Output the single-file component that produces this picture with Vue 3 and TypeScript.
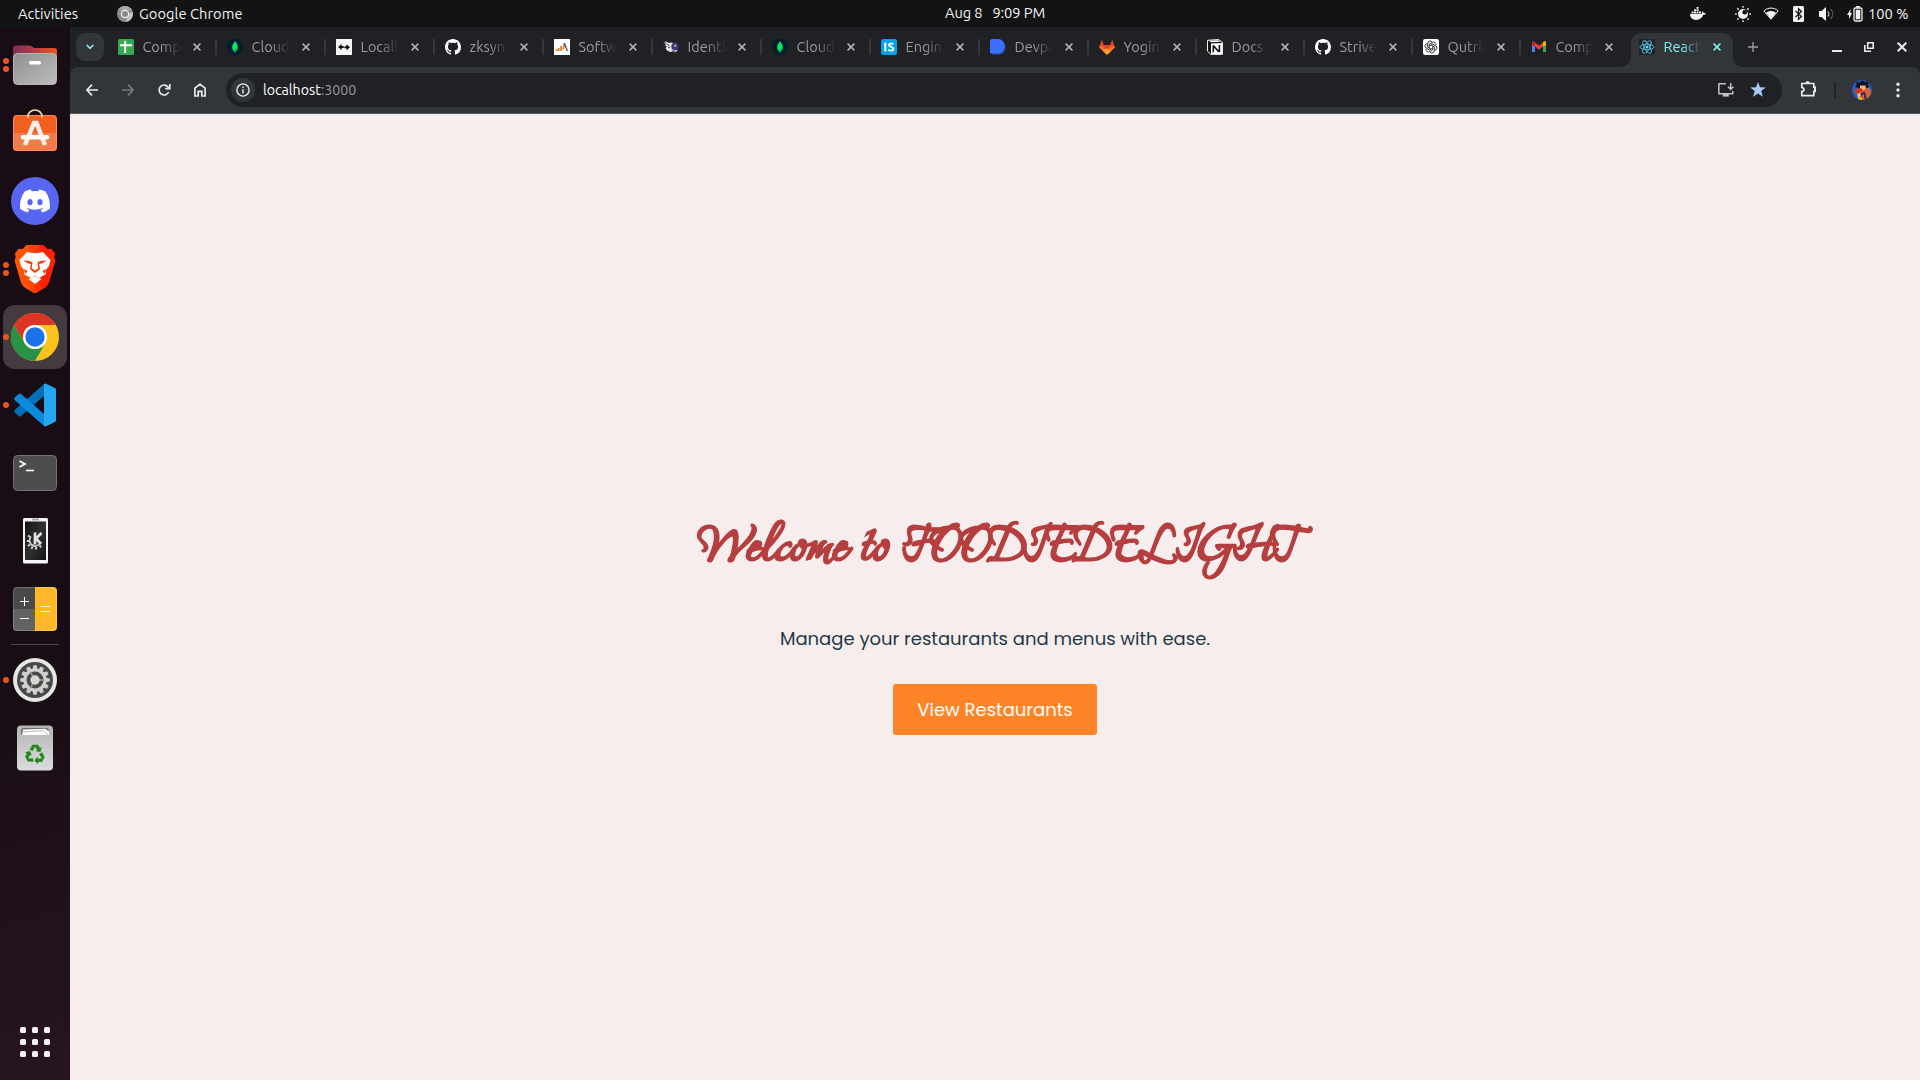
<script setup lang="ts">
interface Tab {
  title: string
  icon: string
  width: number
}

const github =
  '<path fill="#fff" d="M8 0C3.58 0 0 3.58 0 8c0 3.54 2.29 6.53 5.47 7.59.4.07.55-.17.55-.38 0-.19-.01-.82-.01-1.49-2.01.37-2.53-.49-2.69-.94-.09-.23-.48-.94-.82-1.13-.28-.15-.68-.52-.01-.53.63-.01 1.08.58 1.23.82.72 1.21 1.87.87 2.33.66.07-.52.28-.87.51-1.07-1.78-.2-3.64-.89-3.64-3.95 0-.87.31-1.59.82-2.15-.08-.2-.36-1.02.08-2.12 0 0 .67-.21 2.2.82.64-.18 1.32-.27 2-.27s1.36.09 2 .27c1.53-1.04 2.2-.82 2.2-.82.44 1.1.16 1.92.08 2.12.51.56.82 1.27.82 2.15 0 3.07-1.87 3.75-3.65 3.95.29.25.54.73.54 1.48 0 1.07-.01 1.93-.01 2.2 0 .21.15.46.55.38A8.01 8.01 0 0 0 16 8c0-4.42-3.58-8-8-8z"/>'
const mongo =
  '<circle cx="8" cy="8" r="8" fill="#001e2b"/><path fill="#00ed64" d="M8 2.2C6.200 4.500 5.200 6.200 5.200 8.300c0 2 1.100 3.300 2.300 4.200l.2 1.300h.6l.2-1.300c1.200-.9 2.300-2.200 2.300-4.200C10.800 6.200 9.800 4.500 8 2.200z"/><path fill="#00a35c" d="M8 9v4c.6-.3 1.300-1 1.700-2z"/>'

const tabs: Tab[] = [
  { title: 'Comp', width: 109, icon: '<rect width="16" height="16" rx="1.500" fill="#34a853"/><path d="M2 6.200h12M7.200 2v12" stroke="#fff" stroke-width="1.900"/>' },
  { title: 'Cloud', width: 109, icon: mongo },
  { title: 'Locall', width: 109, icon: '<rect width="16" height="16" fill="#f4f4f4"/><path d="M2 8l3.700-3v2h2v2h-2v2zM14 8.300L10.500 5.200v2H8.500v2h2v2z" fill="#0b0b0b"/>' },
  { title: 'zksyn', width: 109, icon: github },
  { title: 'Softw', width: 109, icon: '<rect width="16" height="16" fill="#fff"/><path d="M2.500 12v-1.800M4.700 12V9M7 12V7M9.100 10.500L10.500 4.500" stroke="#e2792f" stroke-width="1.700"/><path d="M10.300 4l3.100 8" stroke="#4b4f54" stroke-width="1.300"/>' },
  { title: 'Identi', width: 109, icon: '<path d="M0 3l3 1-1-2 4 2 2-.5 4 1-1 8-4 .5-3-1.500-1.500-2.500L4 7.500 1.500 6l2-.5z" fill="#e9e4e6"/><path d="M6 11l5-1 4 1-3 2.500z" fill="#d0c6ca"/><circle cx="12" cy="7.500" r="3.700" fill="#3c3589"/><circle cx="12.200" cy="6.800" r="1.300" fill="#c7a24c"/><path d="M3.500 4.500l3 2.500M5 8l2 1M9 12l3 .5" stroke="#292331" stroke-width=".8"/>' },
  { title: 'Cloud', width: 109, icon: mongo },
  { title: 'Engin', width: 109, icon: '<rect width="16" height="16" rx="2.500" fill="#05a2ec"/><path d="M4.300 3.600v8.800" stroke="#fff" stroke-width="2.100"/><path d="M12.300 5.300c-1.400-1.100-4.400-1.200-4.400.7 0 2.200 4.500 1.400 4.500 3.800 0 2.300-3.500 2.200-5.100.8" fill="none" stroke="#fff" stroke-width="1.800"/>' },
  { title: 'Devpa', width: 109, icon: '<path d="M2 1.500h7a6.500 7 0 0 1 0 14H2z" fill="#264eb4"/><path d="M1.500 0H8a6.700 7.200 0 0 1 0 14.400H1.500L0 14V1.500z" fill="#3b70ff"/>' },
  { title: 'Yogin', width: 108, icon: '<path d="M2.800.8L0 8l8 7.800L16 8 13.200.8 11 6H5z" fill="#e24329"/><path d="M8 15.800L.2 8.500 1.200 7l4 .5zM8 15.800l7.800-7.300-1-1.500-4 .5z" fill="#fc6d26"/><path d="M8 15.800L3.800 12 8 9.300l4.200 2.700z" fill="#fca326"/>' },
  { title: 'Docs', width: 108, icon: '<path d="M.5 1.300L11.500.5l4 2.800v12l-11.500.6L.5 12z" fill="#171717" stroke="#f1f1f1" stroke-width="1"/><path d="M4 4.600l11-.6v11l-11 .6z" fill="#fff"/><path d="M1.500 1.800l9.800-.5 2 1.400-9 .6z" fill="#fff"/><path d="M6.300 6.300v7M6.300 6.600l5.500 6.200M12.400 6v7" stroke="#111" stroke-width="1.600" fill="none"/>' },
  { title: 'Strive', width: 108, icon: github },
  { title: 'Qutriz', width: 108, icon: '<rect width="16" height="16" rx="2.200" fill="#fff"/><g fill="none" stroke="#222" stroke-width=".85"><path d="M6.200 9V5.200L9.500 3.300a2.400 2.400 0 0 1 3.400 2.900"/><path d="M6.200 9V5.200L9.500 3.300a2.400 2.400 0 0 1 3.400 2.900" transform="rotate(60 8 8)"/><path d="M6.200 9V5.200L9.500 3.300a2.400 2.400 0 0 1 3.400 2.900" transform="rotate(120 8 8)"/><path d="M6.200 9V5.200L9.500 3.300a2.400 2.400 0 0 1 3.400 2.900" transform="rotate(180 8 8)"/><path d="M6.200 9V5.200L9.500 3.300a2.400 2.400 0 0 1 3.400 2.900" transform="rotate(240 8 8)"/><path d="M6.200 9V5.200L9.500 3.300a2.400 2.400 0 0 1 3.400 2.900" transform="rotate(300 8 8)"/></g>' },
  { title: 'Comp', width: 100, icon: '<path d="M1 4v9h3V6.300z" fill="#4285f4"/><path d="M15 4v9h-3V6.300z" fill="#34a853"/><path d="M4 3.500l4 3.200 4-3.200v4L8 10.700 4 7.500z" fill="#ea4335"/><path d="M1 6V3.800C1 2.300 2.700 2 3.600 2.800L4 3.200v4.300z" fill="#c5221f"/><path d="M15 6V3.800c0-1.500-1.700-1.800-2.600-1l-.4.4v4.300z" fill="#fbbc04"/>' },
]

const teeth = Array.from({ length: 12 }, (_, i) => i * 30)
const rays = Array.from({ length: 8 }, (_, i) => i * 45)
</script>

<template>
  <div class="desktop">
    <header class="topbar">
      <span class="activities">Activities</span>
      <svg class="app-glyph" width="16" height="16" viewBox="0 0 16 16">
        <circle cx="8" cy="8" r="8" fill="#8b8b8b" />
        <path d="M1 4a8 8 0 0 1 14.200 0.500H8z" fill="#a6a6a6" />
        <path d="M15.500 5.500a8 8 0 0 1-6.800 10.400L12 8z" fill="#c4c4c4" />
        <circle cx="8" cy="8" r="3.600" fill="#8a8a8a" stroke="#efefef" stroke-width="1.200" />
      </svg>
      <span class="app-name">Google Chrome</span>
      <span class="clock"><span>Aug 8</span><span>9:09 PM</span></span>
      <div class="tray">
        <svg width="16" height="14" viewBox="0 0 16 14" fill="#f2f2f2">
          <path d="M0 7h11.500c.8-.2.700-1.600.3-2.300.8-.4 1.700.4 1.900 1.300.9-.2 1.900 0 2.300.4-.5 1-1.400 1.400-2.700 1.400C12 11 9.800 12.900 6.200 12.900 2.500 12.900.2 11 0 7z" />
          <path d="M1.500 4.500h2v2h-2zM4 4.500h2v2H4zM6.500 4.500h2v2h-2zM9 4.500h2v2H9zM4 2.200h2v1.900H4zM6.500 2.200h2v1.900h-2zM6.500 0h2v1.800h-2z" />
        </svg>
        <svg class="sun" width="16" height="16" viewBox="0 0 16 16">
          <path v-for="a in rays" :key="a" d="M8 0v1.800" :transform="`rotate(${a} 8 8)`" stroke="#d8d8d8" stroke-width="1.600" />
          <circle cx="8" cy="8" r="5" fill="#f2f2f2" />
          <circle cx="9.800" cy="6.200" r="2.400" fill="#131313" />
        </svg>
        <svg class="wifi" width="16" height="13" viewBox="0 0 16 13">
          <path d="M.8 3.800C5 .2 11 .2 15.200 3.800L8 12.300z" fill="none" stroke="#f2f2f2" />
          <path d="M3 5.800c3-2.400 7-2.400 10 0L8 12z" fill="#f2f2f2" />
        </svg>
        <svg class="bt" width="11" height="16" viewBox="0 0 11 16">
          <rect width="11" height="16" rx="1.500" fill="#f2f2f2" />
          <path d="M2.500 5l6 5.500-3 2.800V2.700l3 2.800L2.500 11" fill="none" stroke="#131313" stroke-width="1.200" />
        </svg>
        <svg class="vol" width="15" height="14" viewBox="0 0 15 14">
          <path d="M0 4h2.500L7 0v14L2.500 10H0z" fill="#f2f2f2" />
          <path d="M8.700 4.500c1.400 1.500 1.400 3.500 0 5" fill="none" stroke="#aaa" stroke-width="1.300" />
          <path d="M11.500 2c3 3 3 7 0 10" fill="none" stroke="#555" stroke-width="1.300" />
        </svg>
        <svg class="battery" width="16" height="16" viewBox="0 0 16 16">
          <path d="M3.800 3L0 9h2v4l3-6H3.200z" fill="#f2f2f2" />
          <rect x="7" y="2" width="8" height="13" rx="1.500" fill="none" stroke="#f2f2f2" stroke-width="1.300" />
          <path d="M9 0h4v1.500H9zM8.700 3.800h4.600v9.500H8.700z" fill="#f2f2f2" />
        </svg>
        <span class="percent">100 %</span>
      </div>
    </header>

    <div class="body">
      <aside class="dock">
        <div class="slot">
          <i class="dots"><b /><b /></i>
          <svg viewBox="0 0 64 64">
            <defs>
              <linearGradient id="folder-back"><stop offset="0" stop-color="#7d2c5a" /><stop offset="1" stop-color="#ef5325" /></linearGradient>
              <linearGradient id="folder-front" x2="1" y2="1"><stop offset="0" stop-color="#8f8f8f" /><stop offset="1" stop-color="#bdbdbd" /></linearGradient>
            </defs>
            <path d="M10 30V15.500a3 3 0 0 1 3-3h13q2 0 3 1l2 1.500h20a3 3 0 0 1 3 3v12z" fill="url(#folder-back)" />
            <rect x="10.500" y="20.500" width="43" height="31" rx="4" fill="url(#folder-front)" stroke="#b9b5b4" />
            <rect x="26" y="28" width="12" height="3.500" rx="1.500" fill="#fff" />
          </svg>
        </div>
        <div class="slot">
          <svg viewBox="0 0 64 64">
            <rect x="10" y="14" width="44" height="36" rx="4" fill="#f1601f" />
            <path d="M10 32h44v14a4 4 0 0 1-4 4H14a4 4 0 0 1-4-4z" fill="#f27b49" />
            <rect x="10.500" y="14.500" width="43" height="35" rx="4" fill="none" stroke="#f58d5e" />
            <path d="M25 17v-1.500a7 6.500 0 0 1 14 0V17" fill="none" stroke="#f6d9a9" stroke-width="1.700" />
            <path d="M22 44L31 22h2.500L42 44" fill="none" stroke="#fff0e9" stroke-width="4.500" />
            <path d="M20 36.200h24" stroke="#fff" stroke-width="4.500" stroke-linecap="round" />
          </svg>
        </div>
        <div class="slot">
          <svg viewBox="0 0 64 64">
            <circle cx="32" cy="32" r="24" fill="#5865f2" />
            <path transform="translate(17 17) scale(1.250)" fill="#fff" d="M20.317 4.370a19.791 19.791 0 0 0-4.885-1.515.074.074 0 0 0-.079.037c-.21.375-.444.864-.608 1.250a18.270 18.270 0 0 0-5.487 0 12.640 12.640 0 0 0-.617-1.250.077.077 0 0 0-.079-.037A19.736 19.736 0 0 0 3.677 4.370a.07.07 0 0 0-.032.027C.533 9.046-.32 13.580.099 18.057a.082.082 0 0 0 .031.057 19.900 19.900 0 0 0 5.993 3.030.078.078 0 0 0 .084-.028 14.090 14.090 0 0 0 1.226-1.994.076.076 0 0 0-.041-.106 13.107 13.107 0 0 1-1.872-.892.077.077 0 0 1-.008-.128 10.200 10.200 0 0 0 .372-.292.074.074 0 0 1 .077-.01c3.928 1.793 8.180 1.793 12.062 0a.074.074 0 0 1 .078.01c.12.098.246.198.373.292a.077.077 0 0 1-.006.127 12.299 12.299 0 0 1-1.873.892.077.077 0 0 0-.041.107c.36.698.772 1.362 1.225 1.993a.076.076 0 0 0 .084.028 19.839 19.839 0 0 0 6.002-3.030.077.077 0 0 0 .032-.054c.5-5.177-.838-9.674-3.549-13.660a.061.061 0 0 0-.031-.03zM8.020 15.330c-1.183 0-2.157-1.085-2.157-2.419 0-1.333.956-2.419 2.157-2.419 1.210 0 2.176 1.096 2.157 2.420 0 1.333-.956 2.418-2.157 2.418zm7.975 0c-1.183 0-2.157-1.085-2.157-2.419 0-1.333.955-2.419 2.157-2.419 1.210 0 2.176 1.096 2.157 2.420 0 1.333-.946 2.418-2.157 2.418z" />
          </svg>
        </div>
        <div class="slot">
          <i class="dots"><b /><b /></i>
          <svg viewBox="0 0 64 64">
            <defs><linearGradient id="brave"><stop offset=".3" stop-color="#ff5500" /><stop offset=".7" stop-color="#ff2000" /></linearGradient></defs>
            <path d="M23.500 8h17l4 4.300 4-.5 3.700 5-1 3 1.200 4-6.500 22q-1 3-3.500 4.800L34 55.500q-2 1-4 0l-8.400-4.900q-2.500-1.800-3.500-4.800l-6.500-22 1.200-4-1-3 3.700-5 4 .5z" fill="url(#brave)" />
            <path d="M24 15l5 1h6l5-1 7.500 8-1.500 6-3.500 4.500.5 3.500-7 4-4-2.500-4 2.500-7-4 .5-3.500L18 29l-1.500-6z" fill="#fff" />
            <path d="M20 23.500l6.500.5 3 1.300-.8 6 3.300 2.200 3.300-2.200-.8-6 3-1.300 6.500-.5-5 2.800-2.800.7.800 5.300-5 3.700-5-3.700.8-5.300-2.800-.7z" fill="#fb3a05" />
            <path d="M21 32l3.500 2-2 3zM43 32l-3.500 2 2 3z" fill="#fb3a05" />
            <path d="M25.500 42l6.500-3 6.500 3-6.500 5z" fill="#fff" />
          </svg>
        </div>
        <div class="slot active">
          <i class="dots"><b /></i>
          <svg viewBox="0 0 64 64">
            <circle cx="32" cy="32" r="24" fill="#fcc31d" />
            <path d="M32 56A24 24 0 0 1 11.200 20L21.600 38A12 12 0 0 0 42.400 38z" fill="#279346" />
            <path d="M11.200 20a24 24 0 0 1 41.600 0H32a12 12 0 0 0-10.400 18z" fill="#de3428" />
            <circle cx="32" cy="32" r="12" fill="#fff" />
            <circle cx="32" cy="32" r="9.700" fill="#1a73e8" />
          </svg>
        </div>
        <div class="slot">
          <i class="dots"><b /></i>
          <svg viewBox="0 0 64 64">
            <path d="M41 11v12L18 43q-1 1-2.300 0L11.700 39.500q-1.200-1.300 0-2.500z" fill="#0070b8" />
            <path d="M41 53V41L18 21q-1-1-2.300 0L11.700 24.500q-1.200 1.300 0 2.500z" fill="#0a8bdc" />
            <path d="M41 11l1.500-.5L52 15q1 .5 1 2v30q0 1.500-1 2l-9.500 4.500L41 53z" fill="#27a7f2" />
          </svg>
        </div>
        <div class="slot">
          <svg viewBox="0 0 64 64">
            <rect x="10.500" y="14.500" width="43" height="35" rx="4" fill="#4d4d4d" stroke="#737173" />
            <path d="M16.500 20l5.500 3-5.500 3" fill="none" stroke="#fff" stroke-width="1.700" />
            <path d="M23 29.500h8" stroke="#fff" stroke-width="1.600" />
          </svg>
        </div>
        <div class="slot">
          <svg viewBox="0 0 64 64">
            <defs><linearGradient id="phone" x2="1" y2="1"><stop offset="0" stop-color="#121212" /><stop offset=".5" stop-color="#303030" /><stop offset="1" stop-color="#151515" /></linearGradient></defs>
            <rect x="20" y="9" width="25" height="45.500" rx="1.500" fill="#f1f3f4" />
            <path d="M29 10.500h7" stroke="#a8a8a8" stroke-width="2" />
            <rect x="22" y="12.500" width="21" height="38.500" fill="url(#phone)" />
            <g stroke="#cfcfcf" fill="none">
              <path d="M28 27.500a5.700 5.700 0 1 0 9.500 6" stroke-width="1.800" />
              <path d="M27 28l-2-1.500M26 32h-2.200M27 35.500l-2 1.500M29.500 37.500l-1 2.500M33 38v2.500M36.500 36.500l1.700 1.700" stroke-width="2" />
              <path d="M32 23.500v12M38.500 24l-5.500 5.500 5 5.500" stroke-width="2.700" stroke="#e4e4e4" />
            </g>
          </svg>
        </div>
        <div class="slot">
          <svg viewBox="0 0 64 64">
            <path d="M32 10v44H14a4 4 0 0 1-4-4V14a4 4 0 0 1 4-4z" fill="#494949" />
            <path d="M10 32h22v22H14a4 4 0 0 1-4-4z" fill="#626262" />
            <path d="M32 10h18a4 4 0 0 1 4 4v36a4 4 0 0 1-4 4H32z" fill="#fdb827" />
            <rect x="10.500" y="10.500" width="43" height="43" rx="4" fill="none" stroke="#fff" stroke-opacity=".2" />
            <path d="M17 24.500h9M21.500 20v9M17 41.500h9M37 29.500h10M37 34.500h10" stroke="#fff" stroke-width="1" />
          </svg>
        </div>
        <div class="rule" />
        <div class="slot">
          <i class="dots"><b /></i>
          <svg viewBox="0 0 64 64">
            <circle cx="32" cy="32" r="22" fill="#e7e7e4" />
            <circle cx="32" cy="32" r="18" fill="#484a49" />
            <path v-for="a in teeth" :key="a" d="M30.400 17.200h3.200l1 4.500h-5.200z" :transform="`rotate(${a} 32 32)`" fill="#cfcfcc" />
            <circle cx="32" cy="32" r="10" fill="none" stroke="#cfcfcc" stroke-width="3.200" />
            <path d="M32 32h9M32 32l-4.500-7.800M32 32l-4.500 7.800" stroke="#8f918f" stroke-width="1.800" />
            <circle cx="32" cy="32" r="4.700" fill="#d6d6d3" />
          </svg>
        </div>
        <div class="slot">
          <svg viewBox="0 0 64 64">
            <defs><linearGradient id="bin" x2="0" y2="1"><stop offset="0" stop-color="#b5b5b5" /><stop offset="1" stop-color="#dcdcdc" /></linearGradient></defs>
            <rect x="14" y="9.500" width="36" height="45" rx="4" fill="url(#bin)" />
            <path d="M18 19v-4q0-3 3-3h22q3 0 3 3v4z" fill="#6c6c6c" />
            <path d="M19 19l1-5.500 22-.8 4 2.500V19z" fill="#fff" />
            <path d="M20 16l20-1.500 5 4.500" fill="none" stroke="#bbb" />
            <g fill="#26871d">
              <path d="M26.500 33.500l3-4.700h5.500l2 3.200 1.800-1-1.300 5-5-.8 1.700-1.200-2.300-3.300-2.200 4.400z" />
              <path transform="rotate(120 32 38.500)" d="M26.500 33.500l3-4.700h5.500l2 3.200 1.800-1-1.300 5-5-.8 1.700-1.200-2.300-3.300-2.200 4.400z" />
              <path transform="rotate(240 32 38.500)" d="M26.500 33.500l3-4.700h5.500l2 3.200 1.800-1-1.300 5-5-.8 1.700-1.200-2.300-3.300-2.200 4.400z" />
            </g>
          </svg>
        </div>
        <div class="slot launcher">
          <div class="grid"><b v-for="n in 9" :key="n" /></div>
        </div>
      </aside>

      <section class="browser">
        <div class="tabstrip">
          <button class="tab-search">
            <svg width="8" height="6" viewBox="0 0 8 6"><path d="M.7 1L4 4.300 7.300 1" fill="none" stroke="#7df3f0" stroke-width="1.700" /></svg>
          </button>
          <div v-for="(tab, i) in tabs" :key="i" class="tab" :class="{ narrow: tab.width < 109 }" :style="{ width: tab.width + 'px' }">
            <svg class="favicon" viewBox="0 0 16 16" v-html="tab.icon" />
            <span class="title">{{ tab.title }}</span>
            <svg class="close" viewBox="0 0 8 8"><path d="M.6.6l6.800 6.800M7.400.6L.6 7.400" /></svg>
            <i v-if="i < tabs.length - 1" class="sep" />
          </div>
          <div class="tab narrow current">
            <svg class="favicon" viewBox="0 0 16 16">
              <rect width="16" height="16" rx="1.500" fill="#20232a" />
              <g fill="none" stroke="#53c1de" stroke-width=".9">
                <ellipse cx="8" cy="8" rx="7" ry="2.700" />
                <ellipse cx="8" cy="8" rx="7" ry="2.700" transform="rotate(60 8 8)" />
                <ellipse cx="8" cy="8" rx="7" ry="2.700" transform="rotate(120 8 8)" />
              </g>
              <circle cx="8" cy="8" r="1.500" fill="#61dafb" />
            </svg>
            <span class="title">React</span>
            <svg class="close" viewBox="0 0 8 8"><path d="M.6.6l6.800 6.800M7.400.6L.6 7.400" /></svg>
          </div>
          <svg class="plus" width="10" height="10" viewBox="0 0 10 10"><path d="M5 0v10M0 5h10" stroke="#9a9c9f" stroke-width="1.400" /></svg>
          <div class="controls">
            <svg class="minimize" width="10" height="10" viewBox="0 0 10 10"><path d="M0 9h10" stroke="#e8eaed" stroke-width="2" /></svg>
            <svg width="10" height="10" viewBox="0 0 10 10"><path d="M3.700.8h5.500v5.500H3.700zM.8 3v6.200H7" fill="none" stroke="#e8eaed" stroke-width="1.600" /></svg>
            <svg width="10" height="10" viewBox="0 0 10 10"><path d="M.7.7l8.600 8.600M9.300.7L.7 9.300" stroke="#e8eaed" stroke-width="2" /></svg>
          </div>
        </div>

        <div class="toolbar-wrap">
          <div class="toolbar">
            <svg class="back" width="12" height="12" viewBox="0 0 12 12"><path d="M12 6H1M6 .7L.9 6 6 11.300" /></svg>
            <svg class="forward" width="12" height="12" viewBox="0 0 12 12"><path d="M0 6h11M6 .7L11.100 6 6 11.300" /></svg>
            <svg class="reload" width="13" height="12" viewBox="0 0 13 12"><path d="M10.700 8A5 5 0 1 1 10.400 3.400L11.300 4.500" /><path d="M11.800 0v4.700H7.200" /></svg>
            <svg class="home" width="12" height="14" viewBox="0 0 12 14"><path d="M.9 13V5.200L6 1.200l5.100 4V13H7.800V8.300H4.200V13z" /></svg>
            <div class="omnibox">
              <span class="info">
                <svg width="14" height="14" viewBox="0 0 14 14"><circle cx="7" cy="7" r="6.100" fill="none" stroke="#e8eaed" stroke-width="1.400" /><path d="M7 3.600v1.500M7 6.300v4.200" stroke="#e8eaed" stroke-width="1.400" /></svg>
              </span>
              <span class="url">localhost<em>:3000</em></span>
              <svg class="install" width="16" height="14" viewBox="0 0 16 14"><path d="M8 .8H.9v10h13.900V8M12.700 0v6M10 3.700l2.700 2.700 2.700-2.700" fill="none" stroke="#bfc1c4" stroke-width="1.500" /><path d="M4.800 10.800h6v2.800h-6z" fill="#bfc1c4" /></svg>
              <svg class="star" width="16" height="15" viewBox="0 0 16 15"><path d="M8 0l2 5.200 5.800.2-4.600 3.600 1.700 5.700L8 11.500l-4.900 3.200L4.800 9 .2 5.400 6 5.200z" fill="#a8c7fa" /></svg>
            </div>
            <svg class="puzzle" width="17" height="17" viewBox="0 0 17 17"><path d="M1.800 3.500h12v3.700h1.300v4.100h-1.300v4.300h-12v-4.100q2.200-.3 2.200-2t-2.200-2z" fill="none" stroke="#e8eaed" stroke-width="1.700" /><path d="M5.300 3.500a2.300 2.500 0 0 1 4.600 0zM14 7a2 2.300 0 0 1 0 4.600z" fill="#e8eaed" /></svg>
            <i class="divider" />
            <svg class="avatar" width="20" height="20" viewBox="0 0 20 20">
              <defs><clipPath id="round"><circle cx="10" cy="10" r="10" /></clipPath></defs>
              <g clip-path="url(#round)">
                <rect width="20" height="20" fill="#1465d8" />
                <path d="M5 4l-2-2 5 .5L10 0l3 2 4-1-1 4 2 2-5 2-6-1-4-1z" fill="#15131b" />
                <path d="M8 5.500h5.500l.5 4-3 2.500-3-2z" fill="#efb489" />
                <path d="M3 9l6-1 3 3-2 3-5 0-3-2z" fill="#d9331e" />
                <path d="M8 12l9-5 2 5-1 8H6z" fill="#d9632a" />
                <path d="M12 12l2 8M8 16l3-3" stroke="#252a61" stroke-width="2" />
                <path d="M5 14l3-1 1 3-3 2z" fill="#e9bb91" />
                <path d="M6 17l4 1v2H6z" fill="#e9c52c" />
              </g>
            </svg>
            <svg class="menu" width="4" height="16" viewBox="0 0 4 16" fill="#e8eaed"><circle cx="2" cy="2.300" r="1.700" /><circle cx="2" cy="8" r="1.700" /><circle cx="2" cy="13.700" r="1.700" /></svg>
          </div>
        </div>

        <main class="page">
          <h1>Welcome to FOODIEDELIGHT</h1>
          <p>Manage your restaurants and menus with ease.</p>
          <button class="cta">View Restaurants</button>
        </main>
      </section>
    </div>
  </div>
</template>

<style>
body {
  margin: 0;
  overflow: hidden;
}
</style>

<style scoped>
.desktop {
  width: 1920px;
  height: 1080px;
  display: flex;
  flex-direction: column;
  font-family: Ubuntu, "Noto Sans", sans-serif;
  background: #131313;
}
svg {
  display: block;
  flex: none;
}
button {
  border: 0;
  padding: 0;
  font: inherit;
}
.topbar {
  position: relative;
  height: 27px;
  display: flex;
  align-items: center;
  color: #f2f2f2;
  font-size: 14.670px;
  white-space: pre;
}
.activities {
  width: 99px;
  padding-left: 18px;
  box-sizing: border-box;
}
.app-glyph {
  margin-left: 18px;
}
.app-name {
  margin-left: 6px;
  letter-spacing: 0.060px;
}
.clock {
  position: absolute;
  top: 4px;
  left: 945px;
  display: flex;
  gap: 10px;
  letter-spacing: -0.100px;
}
.tray {
  margin-left: auto;
  display: flex;
  align-items: center;
  padding-right: 13px;
}
.sun { margin-left: 29px; }
.wifi { margin-left: 12px; }
.bt { margin-left: 14px; }
.vol { margin-left: 15px; }
.battery { margin-left: 13px; }
.percent {
  width: 39px;
  margin-left: 5px;
}
.body {
  flex: 1;
  display: flex;
  min-height: 0;
}
.dock {
  width: 70px;
  box-sizing: border-box;
  padding: 4px 0;
  display: flex;
  flex-direction: column;
  align-items: center;
  background: linear-gradient(165deg, #180d14 60%, #27151f);
}
.slot {
  position: relative;
  width: 64px;
  height: 64px;
  margin: 2px 0;
  flex: none;
}
.slot > svg {
  width: 64px;
  height: 64px;
}
.active {
  border-radius: 12px;
  background: #433b40;
}
.dots {
  position: absolute;
  left: 0;
  top: 0;
  height: 64px;
  display: flex;
  flex-direction: column;
  justify-content: center;
  gap: 2.500px;
}
.dots b {
  width: 6px;
  height: 6px;
  border-radius: 50%;
  background: #e95420;
}
.rule {
  width: 48px;
  height: 1px;
  margin: 1px 0;
  background: #4b4348;
}
.launcher {
  margin-top: auto;
  display: flex;
  align-items: center;
  justify-content: center;
}
.grid {
  display: grid;
  grid-template-columns: repeat(3, 6px);
  gap: 6px;
}
.grid b {
  height: 6px;
  border-radius: 1.500px;
  background: #f2f2f2;
}
.browser {
  flex: 1;
  min-width: 0;
  display: flex;
  flex-direction: column;
  background: #202124;
}
.tabstrip {
  height: 40px;
  display: flex;
  align-items: center;
  padding-left: 6px;
}
.tab-search {
  width: 28px;
  height: 28px;
  margin-right: 14px;
  border-radius: 9px;
  background: #323639;
  display: flex;
  align-items: center;
  justify-content: center;
  flex: none;
}
.tab {
  display: flex;
  align-items: center;
  height: 40px;
  flex: none;
  color: #9a9c9f;
  font-size: 14.500px;
}
.favicon {
  width: 16px;
  height: 16px;
}
.title {
  width: 38px;
  margin: -1px 0 0 8.500px;
  overflow: hidden;
  white-space: nowrap;
  mask-image: linear-gradient(90deg, #000 50%, transparent);
}
.narrow .title {
  width: 37px;
}
.close {
  width: 8px;
  height: 8px;
  margin-left: 12.500px;
  fill: none;
  stroke: #b0b2b5;
  stroke-width: 1.500;
}
.sep {
  width: 2px;
  height: 16px;
  margin-left: 14px;
  background: #36393c;
}
.current {
  position: relative;
  width: 102px;
  height: 34px;
  box-sizing: border-box;
  align-self: flex-end;
  padding: 0 0 6px 8px;
  border-radius: 10px 10px 0 0;
  background: #323639;
  color: #7df3f0;
}
.current .close {
  stroke: #7df3f0;
}
.current::before,
.current::after {
  content: "";
  position: absolute;
  bottom: 0;
  width: 10px;
  height: 10px;
}
.current::before {
  left: -10px;
  background: radial-gradient(circle at 0 0, transparent 9.500px, #323639 10px);
}
.current::after {
  right: -10px;
  background: radial-gradient(circle at 100% 0, transparent 9.500px, #323639 10px);
}
.plus {
  margin-left: 15px;
}
.controls {
  margin-left: auto;
  padding-right: 13px;
  display: flex;
  gap: 23px;
}
.minimize {
  margin-right: -1px;
}
.toolbar-wrap {
  background: #202124;
}
.toolbar {
  height: 47px;
  box-sizing: border-box;
  padding-bottom: 1px;
  border-bottom: 1px solid #55595b;
  border-radius: 8px 8px 0 0;
  background: #323639;
  display: flex;
  align-items: center;
}
.back, .forward, .reload, .home {
  fill: none;
  stroke: #e8eaed;
  stroke-width: 1.700;
}
.back { margin-left: 16px; }
.forward { margin-left: 24px; stroke: #777a7d; }
.reload { margin-left: 24px; }
.home { margin-left: 23px; }
.omnibox {
  width: 1556px;
  height: 34px;
  margin-left: 20px;
  border-radius: 17px;
  background: #202124;
  display: flex;
  align-items: center;
  flex: none;
}
.info {
  width: 24px;
  height: 24px;
  margin-left: 5px;
  border-radius: 50%;
  background: #323639;
  display: flex;
  align-items: center;
  justify-content: center;
}
.url {
  margin-left: 8px;
  color: #fff;
  font-size: 14.200px;
}
.url em {
  color: #9a9c9f;
  font-style: normal;
}
.install { margin-left: auto; }
.star { margin: 0 16px; }
.puzzle { margin: -2px 0 0 18px; }
.divider {
  width: 2px;
  height: 16px;
  margin-left: 17px;
  background: #212427;
}
.avatar { margin-left: 16px; }
.menu { margin-left: 24px; }
.page {
  flex: 1;
  display: flex;
  flex-direction: column;
  align-items: center;
  background: #f7edec;
  font-family: Poppins, Inter, sans-serif;
}
h1 {
  margin: 391px 0 0 3px;
  height: 72px;
  color: #b53f3f;
  font-family: "Grey Qo", cursive;
  font-size: 64px;
  font-weight: 700;
  line-height: 73px;
  white-space: nowrap;
  -webkit-text-stroke: 1px #b53f3f;
}
p {
  margin: 48px 0 0;
  color: #1d3a48;
  font-size: 18px;
  line-height: 28px;
  white-space: nowrap;
}
.cta {
  width: 204px;
  height: 51px;
  margin-top: 31px;
  border-radius: 3px;
  background: #ff8427;
  color: #fff;
  font-size: 18px;
}
</style>
